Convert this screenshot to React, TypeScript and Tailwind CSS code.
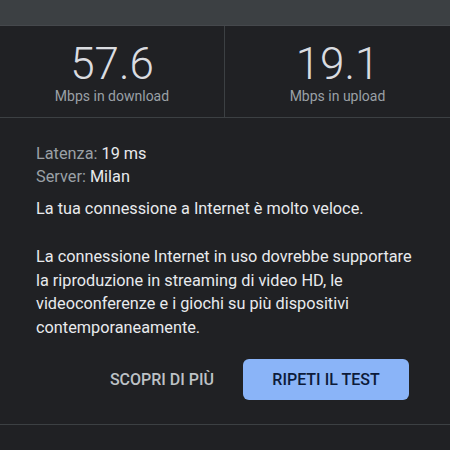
export default function App() {
  return (
    <div className="w-[450px] h-[450px] overflow-hidden bg-[#202124] font-['Roboto',sans-serif] text-[#e8eaed]">
      <div className="h-[26px] bg-[#3c4043] border-b border-[#45484c]" />
      <div className="grid grid-cols-2 h-[92px] border-b border-[#3c4043]">
        <div className="flex flex-col items-center border-r border-[#3c4043] pt-[18px]">
          <span className="text-[44px] leading-[40px] font-light text-[#dadce0]">57.6</span>
          <span className="mt-[3px] text-[14px] leading-[18px] text-[#9aa0a6]">Mbps in download</span>
        </div>
        <div className="flex flex-col items-center pt-[18px]">
          <span className="text-[44px] leading-[40px] font-light text-[#dadce0]">19.1</span>
          <span className="mt-[3px] text-[14px] leading-[18px] text-[#9aa0a6]">Mbps in upload</span>
        </div>
      </div>
      <div className="px-[36px] pt-[24px] text-[16.3px] leading-[23px]">
        <p>
          <span className="text-[#9aa0a6]">Latenza: </span>19 ms
        </p>
        <p>
          <span className="text-[#9aa0a6]">Server: </span>Milan
        </p>
        <p className="mt-[9px]">La tua connessione a Internet è molto veloce.</p>
        <p className="mt-[25px] leading-[23.5px]">
          La connessione Internet in uso dovrebbe supportare la riproduzione in streaming di video HD, le videoconferenze e i giochi su più dispositivi contemporaneamente.
        </p>
      </div>
      <div className="flex items-center justify-end gap-[29px] pr-[41px] pt-[20px] pb-[24px] border-b border-[#3c4043]">
        <button className="text-[16px] font-medium text-[#bdc1c6]">SCOPRI DI PIÙ</button>
        <button className="w-[166px] h-[41px] rounded-[6px] bg-[#8ab4f8] text-[16px] font-medium text-[#0d1b3a]">
          RIPETI IL TEST
        </button>
      </div>
    </div>
  );
}
